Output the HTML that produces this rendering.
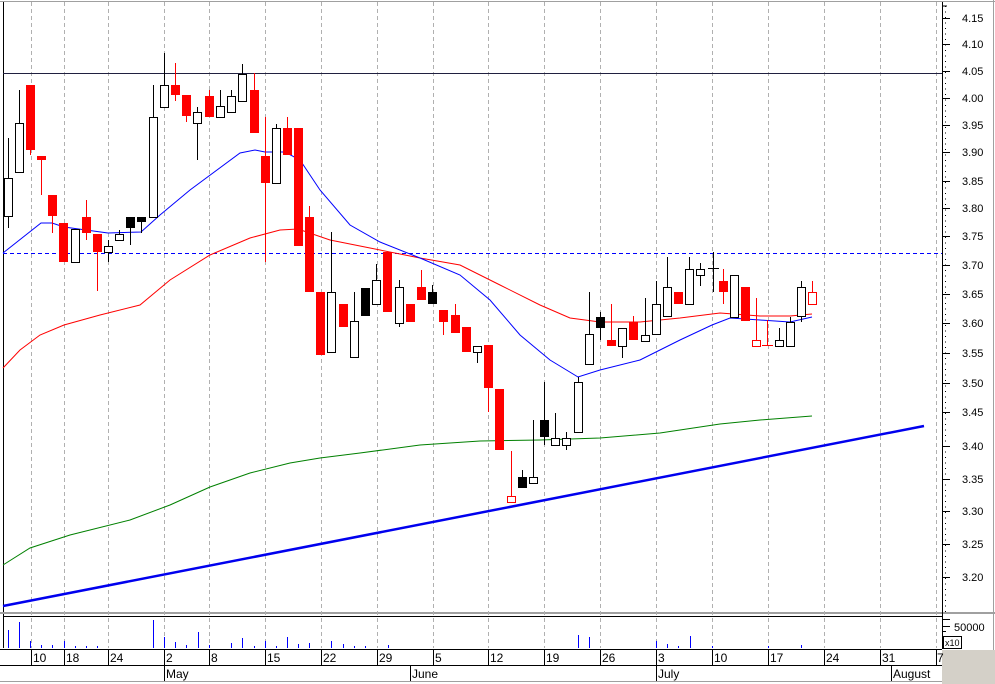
<!DOCTYPE html>
<html><head><meta charset="utf-8"><style>
html,body{margin:0;padding:0;background:#fff;}
svg{display:block;font-family:"Liberation Sans",sans-serif;font-size:11px;}
</style></head><body>
<svg width="995" height="684" viewBox="0 0 995 684" xmlns="http://www.w3.org/2000/svg" shape-rendering="crispEdges">
<rect x="0" y="0" width="995" height="684" fill="#fff"/>
<!-- borders -->
<line x1="0" y1="1.5" x2="995" y2="1.5" stroke="#a0a0a0"/>
<line x1="993.5" y1="0" x2="993.5" y2="684" stroke="#a0a0a0"/>
<line x1="3.5" y1="2" x2="3.5" y2="648" stroke="#000"/>
<line x1="0" y1="613" x2="995" y2="613" stroke="#a0a0a0" stroke-width="2"/>
<line x1="3" y1="616.5" x2="942" y2="616.5" stroke="#000"/>
<line x1="942.5" y1="2" x2="942.5" y2="649" stroke="#000"/>
<!-- vertical dashed grid -->
<g stroke="#b0b0b0" stroke-dasharray="4,3">
<line x1="31.5" y1="2" x2="31.5" y2="648"/><line x1="64.5" y1="2" x2="64.5" y2="648"/><line x1="108.5" y1="2" x2="108.5" y2="648"/><line x1="164.5" y1="2" x2="164.5" y2="648"/><line x1="209.5" y1="2" x2="209.5" y2="648"/><line x1="265.5" y1="2" x2="265.5" y2="648"/><line x1="321.5" y1="2" x2="321.5" y2="648"/><line x1="377.5" y1="2" x2="377.5" y2="648"/><line x1="433.5" y1="2" x2="433.5" y2="648"/><line x1="488.5" y1="2" x2="488.5" y2="648"/><line x1="544.5" y1="2" x2="544.5" y2="648"/><line x1="600.5" y1="2" x2="600.5" y2="648"/><line x1="656.5" y1="2" x2="656.5" y2="648"/><line x1="712.5" y1="2" x2="712.5" y2="648"/><line x1="768.5" y1="2" x2="768.5" y2="648"/><line x1="824.5" y1="2" x2="824.5" y2="648"/><line x1="880.5" y1="2" x2="880.5" y2="648"/><line x1="936.5" y1="2" x2="936.5" y2="648"/>
</g>
<!-- horizontal lines -->
<line x1="3" y1="73.5" x2="942" y2="73.5" stroke="#202040"/>
<line x1="3" y1="253.5" x2="942" y2="253.5" stroke="#0000ff" stroke-dasharray="4,3"/>
<!-- trendline -->
<line x1="3" y1="606" x2="924" y2="426" stroke="#0000ee" stroke-width="2.5" shape-rendering="auto"/>
<!-- MAs -->
<g fill="none" stroke-width="1" shape-rendering="auto">
<polyline stroke="#008000" points="3,565 30,548 70,535 130,520 170,505 210,487 250,473 290,463 320,458 360,453 420,445 480,441 540,440 600,438 660,433 720,424 760,420 812,416"/>
<polyline stroke="#ff0000" points="3,368 20,350 40,335 64,325 100,315 140,305 170,280 210,255 250,238 280,230 298,229 330,240 370,248 420,258 460,265 500,285 540,305 570,318 600,322 640,322 680,318 720,313 760,316 790,316 812,314"/>
<polyline stroke="#0000ff" points="3,253 41,223 52,223 64,227 86,230 108,233 141,232 160,215 190,190 240,153 255,150 265,152 285,152 300,160 320,190 350,225 380,242 420,258 460,275 490,300 520,335 550,360 578,377 600,370 640,360 680,340 712,325 730,318 760,320 790,322 812,317"/>
</g>
<!-- wicks -->
<g stroke="#000" stroke-width="1">
<line x1="8.5" y1="138" x2="8.5" y2="228"/><line x1="19.5" y1="90" x2="19.5" y2="172"/>
<line x1="75.5" y1="229" x2="75.5" y2="262"/><line x1="108.5" y1="240" x2="108.5" y2="262"/><line x1="119.5" y1="230" x2="119.5" y2="240"/><line x1="130.5" y1="217" x2="130.5" y2="245"/><line x1="141.5" y1="217" x2="141.5" y2="233"/><line x1="153.5" y1="85" x2="153.5" y2="217"/><line x1="164.5" y1="53" x2="164.5" y2="107"/><line x1="197.5" y1="107" x2="197.5" y2="160"/><line x1="220.5" y1="90" x2="220.5" y2="117"/><line x1="231.5" y1="90" x2="231.5" y2="112"/><line x1="242.5" y1="64" x2="242.5" y2="101"/><line x1="276.5" y1="124" x2="276.5" y2="183"/><line x1="331.5" y1="232" x2="331.5" y2="352"/><line x1="354.5" y1="292" x2="354.5" y2="357"/><line x1="365.5" y1="288" x2="365.5" y2="316"/><line x1="376.5" y1="264" x2="376.5" y2="304"/><line x1="399.5" y1="280" x2="399.5" y2="327"/><line x1="432.5" y1="285" x2="432.5" y2="304"/><line x1="477.5" y1="346" x2="477.5" y2="363"/><line x1="522.5" y1="470" x2="522.5" y2="488"/><line x1="533.5" y1="420" x2="533.5" y2="483"/><line x1="544.5" y1="382" x2="544.5" y2="445"/><line x1="555.5" y1="413" x2="555.5" y2="445"/><line x1="566.5" y1="432" x2="566.5" y2="450"/><line x1="578.5" y1="377" x2="578.5" y2="432"/><line x1="589.5" y1="292" x2="589.5" y2="364"/><line x1="600.5" y1="312" x2="600.5" y2="340"/><line x1="622.5" y1="328" x2="622.5" y2="358"/><line x1="645.5" y1="298" x2="645.5" y2="341"/><line x1="656.5" y1="281" x2="656.5" y2="334"/><line x1="667.5" y1="257" x2="667.5" y2="316"/><line x1="689.5" y1="257" x2="689.5" y2="304"/><line x1="700.5" y1="263" x2="700.5" y2="286"/><line x1="713.5" y1="252" x2="713.5" y2="292"/><line x1="708" y1="268.5" x2="719" y2="268.5"/><line x1="734.5" y1="275" x2="734.5" y2="317"/><line x1="779.5" y1="328" x2="779.5" y2="346"/><line x1="790.5" y1="317" x2="790.5" y2="346"/><line x1="801.5" y1="281" x2="801.5" y2="322"/>
</g>
<g stroke="#ff0000" stroke-width="1">
<line x1="30.5" y1="85" x2="30.5" y2="155"/><line x1="41.5" y1="156" x2="41.5" y2="195"/><line x1="52.5" y1="195" x2="52.5" y2="233"/><line x1="86.5" y1="200" x2="86.5" y2="240"/><line x1="97.5" y1="234" x2="97.5" y2="291"/><line x1="175.5" y1="63" x2="175.5" y2="101"/><line x1="186.5" y1="95" x2="186.5" y2="122"/><line x1="209.5" y1="90" x2="209.5" y2="117"/><line x1="254.5" y1="73" x2="254.5" y2="133"/><line x1="265.5" y1="117" x2="265.5" y2="262"/><line x1="287.5" y1="117" x2="287.5" y2="155"/><line x1="309.5" y1="206" x2="309.5" y2="292"/><line x1="421.5" y1="270" x2="421.5" y2="300"/><line x1="443.5" y1="310" x2="443.5" y2="335"/><line x1="455.5" y1="304" x2="455.5" y2="333"/><line x1="488.5" y1="345" x2="488.5" y2="412"/><line x1="511.5" y1="451" x2="511.5" y2="502"/><line x1="611.5" y1="304" x2="611.5" y2="346"/><line x1="633.5" y1="316" x2="633.5" y2="340"/><line x1="723.5" y1="269" x2="723.5" y2="304"/><line x1="756.5" y1="298" x2="756.5" y2="346"/><line x1="767.5" y1="320" x2="767.5" y2="346"/><line x1="762" y1="345.5" x2="773" y2="345.5"/><line x1="812.5" y1="281" x2="812.5" y2="304"/>
</g>
<!-- red bodies -->
<g fill="#ff0000">
<rect x="26" y="85" width="9" height="65"/><rect x="37" y="156" width="9" height="4"/><rect x="48" y="195" width="9" height="21"/><rect x="59" y="223" width="9" height="39"/><rect x="82" y="217" width="9" height="16"/><rect x="93" y="234" width="9" height="18"/><rect x="171" y="85" width="9" height="10"/><rect x="182" y="95" width="9" height="21"/><rect x="205" y="96" width="9" height="21"/><rect x="250" y="90" width="9" height="43"/><rect x="261" y="156" width="9" height="27"/><rect x="283" y="128" width="9" height="27"/><rect x="294" y="128" width="9" height="118"/><rect x="305" y="217" width="9" height="75"/><rect x="316" y="292" width="9" height="63"/><rect x="339" y="304" width="9" height="23"/><rect x="383" y="252" width="9" height="60"/><rect x="406" y="304" width="9" height="18"/><rect x="417" y="287" width="9" height="13"/><rect x="439" y="310" width="9" height="12"/><rect x="451" y="315" width="9" height="18"/><rect x="462" y="327" width="9" height="25"/><rect x="484" y="345" width="9" height="43"/><rect x="495" y="389" width="9" height="61"/><rect x="607" y="340" width="9" height="6"/><rect x="629" y="322" width="9" height="18"/><rect x="674" y="292" width="9" height="12"/><rect x="719" y="281" width="9" height="11"/><rect x="741" y="287" width="9" height="34"/>
</g>
<!-- red hollow -->
<g fill="#fff" stroke="#ff0000">
<rect x="507.5" y="496.5" width="8" height="6"/><rect x="752.5" y="340.5" width="8" height="6"/><rect x="808.5" y="292.5" width="8" height="12"/>
</g>
<!-- black bodies -->
<g fill="#000">
<rect x="126" y="217" width="9" height="11"/><rect x="137" y="217" width="9" height="5"/><rect x="361" y="288" width="9" height="28"/><rect x="428" y="292" width="9" height="12"/><rect x="518" y="477" width="9" height="11"/><rect x="540" y="420" width="9" height="17"/><rect x="596" y="317" width="9" height="11"/>
</g>
<!-- hollow bodies -->
<g fill="#fff" stroke="#000">
<rect x="4.5" y="178.5" width="8" height="38"/><rect x="15.5" y="123.5" width="8" height="49"/><rect x="71.5" y="229.5" width="8" height="33"/><rect x="104.5" y="246.5" width="8" height="6"/><rect x="115.5" y="234.5" width="8" height="6"/><rect x="149.5" y="117.5" width="8" height="100"/><rect x="160.5" y="85.5" width="8" height="22"/><rect x="193.5" y="112.5" width="8" height="11"/><rect x="216.5" y="106.5" width="8" height="11"/><rect x="227.5" y="96.5" width="8" height="16"/><rect x="238.5" y="74.5" width="8" height="27"/><rect x="272.5" y="128.5" width="8" height="55"/><rect x="327.5" y="292.5" width="8" height="60"/><rect x="350.5" y="321.5" width="8" height="36"/><rect x="372.5" y="280.5" width="8" height="24"/><rect x="395.5" y="287.5" width="8" height="36"/><rect x="473.5" y="346.5" width="8" height="6"/><rect x="529.5" y="477.5" width="8" height="6"/><rect x="551.5" y="438.5" width="8" height="7"/><rect x="562.5" y="438.5" width="8" height="7"/><rect x="574.5" y="382.5" width="8" height="50"/><rect x="585.5" y="334.5" width="8" height="30"/><rect x="618.5" y="328.5" width="8" height="18"/><rect x="641.5" y="335.5" width="8" height="6"/><rect x="652.5" y="304.5" width="8" height="30"/><rect x="663.5" y="287.5" width="8" height="29"/><rect x="685.5" y="269.5" width="8" height="35"/><rect x="696.5" y="269.5" width="8" height="6"/><rect x="730.5" y="275.5" width="8" height="42"/><rect x="775.5" y="340.5" width="8" height="6"/><rect x="786.5" y="322.5" width="8" height="24"/><rect x="797.5" y="287.5" width="8" height="29"/>
</g>
<!-- price axis ticks -->
<g stroke="#000">
<line x1="942" y1="18.5" x2="950" y2="18.5"/><line x1="942" y1="44.5" x2="950" y2="44.5"/><line x1="942" y1="71.5" x2="950" y2="71.5"/><line x1="942" y1="98.5" x2="950" y2="98.5"/><line x1="942" y1="125.5" x2="950" y2="125.5"/><line x1="942" y1="152.5" x2="950" y2="152.5"/><line x1="942" y1="181.5" x2="950" y2="181.5"/><line x1="942" y1="208.5" x2="950" y2="208.5"/><line x1="942" y1="236.5" x2="950" y2="236.5"/><line x1="942" y1="265.5" x2="950" y2="265.5"/><line x1="942" y1="294.5" x2="950" y2="294.5"/><line x1="942" y1="323.5" x2="950" y2="323.5"/><line x1="942" y1="353.5" x2="950" y2="353.5"/><line x1="942" y1="383.5" x2="950" y2="383.5"/><line x1="942" y1="412.5" x2="950" y2="412.5"/><line x1="942" y1="446.5" x2="950" y2="446.5"/><line x1="942" y1="479.5" x2="950" y2="479.5"/><line x1="942" y1="511.5" x2="950" y2="511.5"/><line x1="942" y1="544.5" x2="950" y2="544.5"/><line x1="942" y1="577.5" x2="950" y2="577.5"/>
</g>
<g stroke="#000" stroke-dasharray="1,4.5">
<line x1="945.5" y1="6" x2="945.5" y2="612" stroke-dasharray="1,4.5"/>
</g>
<line x1="942" y1="6" x2="947" y2="6" stroke="#000"/>
<g fill="#000">
<text x="962" y="22">4.15</text><text x="962" y="48">4.10</text><text x="962" y="75">4.05</text><text x="962" y="102">4.00</text><text x="962" y="129">3.95</text><text x="962" y="156">3.90</text><text x="962" y="185">3.85</text><text x="962" y="212">3.80</text><text x="962" y="240">3.75</text><text x="962" y="269">3.70</text><text x="962" y="298">3.65</text><text x="962" y="327">3.60</text><text x="962" y="357">3.55</text><text x="962" y="387">3.50</text><text x="962" y="416">3.45</text><text x="962" y="450">3.40</text><text x="962" y="483">3.35</text><text x="962" y="515">3.30</text><text x="962" y="548">3.25</text><text x="962" y="581">3.20</text>
</g>
<!-- volume -->
<g stroke="#0000ff">
<line x1="8.5" y1="630" x2="8.5" y2="648"/><line x1="19.5" y1="622" x2="19.5" y2="648"/><line x1="30.5" y1="641" x2="30.5" y2="648"/><line x1="41.5" y1="645" x2="41.5" y2="648"/><line x1="52.5" y1="645" x2="52.5" y2="648"/><line x1="64.5" y1="641" x2="64.5" y2="648"/><line x1="75.5" y1="646" x2="75.5" y2="648"/><line x1="86.5" y1="646" x2="86.5" y2="648"/><line x1="97.5" y1="646" x2="97.5" y2="648"/><line x1="153.5" y1="620" x2="153.5" y2="648"/><line x1="164.5" y1="637" x2="164.5" y2="648"/><line x1="175.5" y1="642" x2="175.5" y2="648"/><line x1="186.5" y1="645" x2="186.5" y2="648"/><line x1="198.5" y1="632" x2="198.5" y2="648"/><line x1="209.5" y1="645" x2="209.5" y2="648"/><line x1="231.5" y1="643" x2="231.5" y2="648"/><line x1="242.5" y1="638" x2="242.5" y2="648"/><line x1="254.5" y1="646" x2="254.5" y2="648"/><line x1="265.5" y1="641" x2="265.5" y2="648"/><line x1="276.5" y1="646" x2="276.5" y2="648"/><line x1="287.5" y1="637" x2="287.5" y2="648"/><line x1="298.5" y1="644" x2="298.5" y2="648"/><line x1="309.5" y1="643" x2="309.5" y2="648"/><line x1="331.5" y1="641" x2="331.5" y2="648"/><line x1="343.5" y1="644" x2="343.5" y2="648"/><line x1="354.5" y1="646" x2="354.5" y2="648"/><line x1="365.5" y1="646" x2="365.5" y2="648"/><line x1="388.5" y1="645" x2="388.5" y2="648"/><line x1="578.5" y1="635" x2="578.5" y2="648"/><line x1="589.5" y1="637" x2="589.5" y2="648"/><line x1="656.5" y1="641" x2="656.5" y2="648"/><line x1="667.5" y1="644" x2="667.5" y2="648"/><line x1="678.5" y1="646" x2="678.5" y2="648"/><line x1="690.5" y1="636" x2="690.5" y2="648"/><line x1="712.5" y1="646" x2="712.5" y2="648"/><line x1="768.5" y1="646" x2="768.5" y2="648"/><line x1="801.5" y1="645" x2="801.5" y2="648"/>
</g>
<g stroke="#000"><line x1="942" y1="619.5" x2="950" y2="619.5"/><line x1="942" y1="626.5" x2="950" y2="626.5"/><line x1="942" y1="631.5" x2="946" y2="631.5"/><line x1="942" y1="636.5" x2="946" y2="636.5"/></g>
<text x="954" y="631" fill="#000">50000</text>
<rect x="943.5" y="636.5" width="18" height="12" fill="#fff" stroke="#000"/>
<text x="945" y="646" font-size="9" fill="#000">x10</text>
<!-- date axis -->
<rect x="942" y="650" width="53" height="34" fill="#d4d0c8"/>
<line x1="0" y1="649.5" x2="942" y2="649.5" stroke="#000"/>
<line x1="0" y1="665.5" x2="942" y2="665.5" stroke="#000"/>
<line x1="0" y1="681.5" x2="942" y2="681.5" stroke="#a0a0a0"/>
<g stroke="#000">
<line x1="31.5" y1="650" x2="31.5" y2="665"/><line x1="64.5" y1="650" x2="64.5" y2="665"/><line x1="108.5" y1="650" x2="108.5" y2="665"/><line x1="164.5" y1="650" x2="164.5" y2="681"/><line x1="209.5" y1="650" x2="209.5" y2="665"/><line x1="265.5" y1="650" x2="265.5" y2="665"/><line x1="321.5" y1="650" x2="321.5" y2="665"/><line x1="377.5" y1="650" x2="377.5" y2="665"/><line x1="410.5" y1="665" x2="410.5" y2="681"/><line x1="433.5" y1="650" x2="433.5" y2="665"/><line x1="488.5" y1="650" x2="488.5" y2="665"/><line x1="544.5" y1="650" x2="544.5" y2="665"/><line x1="600.5" y1="650" x2="600.5" y2="665"/><line x1="656.5" y1="650" x2="656.5" y2="681"/><line x1="712.5" y1="650" x2="712.5" y2="665"/><line x1="768.5" y1="650" x2="768.5" y2="665"/><line x1="824.5" y1="650" x2="824.5" y2="665"/><line x1="880.5" y1="650" x2="880.5" y2="665"/><line x1="891.5" y1="665" x2="891.5" y2="681"/><line x1="936.5" y1="650" x2="936.5" y2="665"/>
</g>
<g fill="#000" font-size="12">
<text x="33" y="662">10</text><text x="66" y="662">18</text><text x="110" y="662">24</text><text x="166" y="662">2</text><text x="211" y="662">8</text><text x="267" y="662">15</text><text x="323" y="662">22</text><text x="379" y="662">29</text><text x="435" y="662">5</text><text x="490" y="662">12</text><text x="546" y="662">19</text><text x="602" y="662">26</text><text x="658" y="662">3</text><text x="714" y="662">10</text><text x="770" y="662">17</text><text x="826" y="662">24</text><text x="882" y="662">31</text><text x="937" y="662">7</text>
<text x="166" y="678">May</text><text x="412" y="678">June</text><text x="658" y="678">July</text><text x="893" y="678">August</text>
</g>
</svg>
</body></html>
